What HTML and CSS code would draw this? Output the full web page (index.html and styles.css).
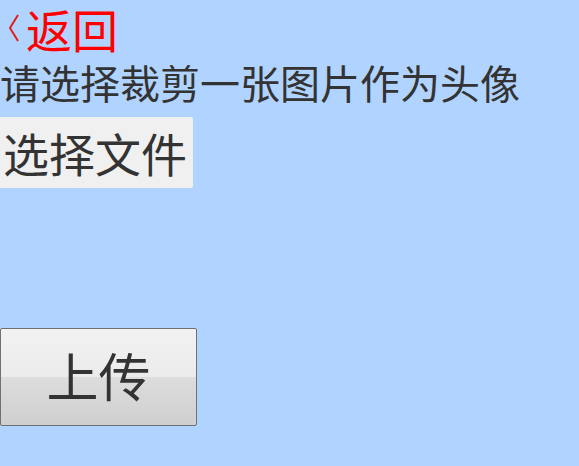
FILE: index.html
```html
<!DOCTYPE html>
<html lang="zh-CN">
<head>
<meta charset="utf-8">
<title>上传头像</title>
<link rel="stylesheet" href="styles.css">
</head>
<body>
<div class="page">
  <a class="back" href="#"><svg class="chev" width="12" height="30" viewBox="0 0 12 30"><polyline points="10,2 2,15 10,28" fill="none" stroke="#e0201c" stroke-width="2"/></svg><span>返回</span></a>
  <p class="tip">请选择裁剪一张图片作为头像</p>
  <label class="file-btn">选择文件</label>
  <div class="preview"></div>
  <button class="upload">上传</button>
</div>
</body>
</html>
```
FILE: styles.css
```css
html, body {
  margin: 0;
  padding: 0;
  background: #b0d4ff;
}
body {
  font-family: "Noto Sans CJK SC", "Noto Sans", sans-serif;
  color: #333;
}
.page {
  display: flex;
  flex-direction: column;
  align-items: flex-start;
}
.back {
  display: flex;
  align-items: center;
  gap: 6px;
  color: #ff0000;
  text-decoration: none;
  font-size: 46px;
  line-height: 56px;
  padding-left: 8px;
}
.tip {
  margin: 0;
  font-size: 40px;
  line-height: 52px;
}
.file-btn {
  display: block;
  background: #f0f0f0;
  font-size: 46px;
  line-height: 71px;
  padding: 0 6px 0 3px;
  margin-top: 9px;
  border-radius: 0 2px 2px 0;
}
.preview {
  height: 140px;
}
.upload {
  width: 197px;
  height: 98px;
  font-family: inherit;
  font-size: 52px;
  color: #333;
  border: 1px solid #707070;
  border-radius: 2px;
  background: linear-gradient(#f2f2f2 0%, #ebebeb 50%, #dddddd 50%, #cfcfcf 100%);
  padding: 0 0 6px 0;
}
```
